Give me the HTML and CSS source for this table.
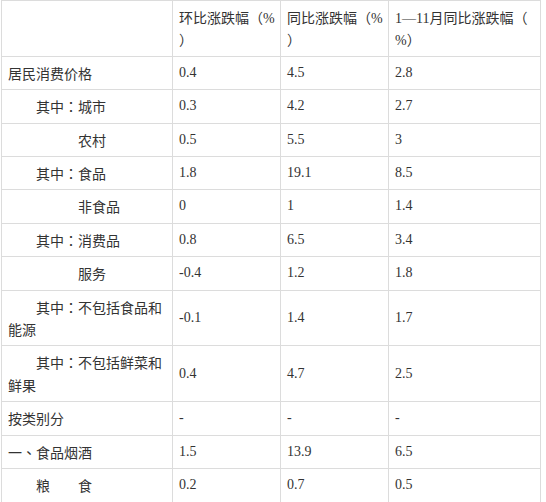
FILE: index.html
```html
<!DOCTYPE html>
<html lang="zh-CN">
<head>
<meta charset="utf-8">
<link rel="stylesheet" href="styles.css">
</head>
<body>
<table class="data">
  <colgroup>
    <col class="c1"><col class="c2"><col class="c3"><col class="c4">
  </colgroup>
  <thead>
    <tr>
      <th></th>
      <th><span class="ln">环比涨跌幅<span class="p" lang="zh-TW">（</span><span class="lat">%</span></span><span class="ln"><span class="p" lang="zh-TW">）</span></span></th>
      <th><span class="ln">同比涨跌幅<span class="p" lang="zh-TW">（</span><span class="lat">%</span></span><span class="ln"><span class="p" lang="zh-TW">）</span></span></th>
      <th><span class="ln"><span class="lat">1—11</span>月同比涨跌幅<span class="p" lang="zh-TW">（</span></span><span class="ln"><span class="lat">%</span><span class="p" lang="zh-TW">）</span></span></th>
    </tr>
  </thead>
  <tbody>
    <tr><td class="name">居民消费价格</td><td>0.4</td><td>4.5</td><td>2.8</td></tr>
    <tr><td class="name ind">其中<span class="p" lang="zh-TW">：</span>城市</td><td>0.3</td><td>4.2</td><td>2.7</td></tr>
    <tr><td class="name ind">　　　农村</td><td>0.5</td><td>5.5</td><td>3</td></tr>
    <tr><td class="name ind">其中<span class="p" lang="zh-TW">：</span>食品</td><td>1.8</td><td>19.1</td><td>8.5</td></tr>
    <tr><td class="name ind">　　　非食品</td><td>0</td><td>1</td><td>1.4</td></tr>
    <tr><td class="name ind">其中<span class="p" lang="zh-TW">：</span>消费品</td><td>0.8</td><td>6.5</td><td>3.4</td></tr>
    <tr><td class="name ind">　　　服务</td><td>-0.4</td><td>1.2</td><td>1.8</td></tr>
    <tr><td class="name ind">其中<span class="p" lang="zh-TW">：</span>不包括食品和能源</td><td>-0.1</td><td>1.4</td><td>1.7</td></tr>
    <tr><td class="name ind">其中<span class="p" lang="zh-TW">：</span>不包括鲜菜和鲜果</td><td>0.4</td><td>4.7</td><td>2.5</td></tr>
    <tr><td class="name">按类别分</td><td>-</td><td>-</td><td>-</td></tr>
    <tr><td class="name">一<span class="p" lang="zh-TW">、</span>食品烟酒</td><td>1.5</td><td>13.9</td><td>6.5</td></tr>
    <tr><td class="name ind">粮　　食</td><td>0.2</td><td>0.7</td><td>0.5</td></tr>
  </tbody>
</table>
</body>
</html>
```

FILE: styles.css
```css
html, body {
  margin: 0;
  padding: 0;
  background: #fff;
}

body {
  padding-left: 1px;
  font-family: "Liberation Serif", serif;
  font-size: 14px;
  line-height: 22.4px;
  color: #333;
}

.data {
  border-collapse: collapse;
  table-layout: fixed;
  width: 539px;
}

.c1 { width: 171px; }
.c2 { width: 108px; }
.c3 { width: 108px; }
.c4 { width: 152px; }

.data th,
.data td {
  border: 1px solid #dcdcdc;
  padding: 5px 6px;
  text-align: left;
  vertical-align: middle;
  font-weight: normal;
}

.data th {
  vertical-align: top;
  font-family: "Noto Sans CJK SC", sans-serif;
}

.data td.name {
  font-family: "Noto Sans CJK SC", sans-serif;
}

.data td.ind {
  text-indent: 2em;
}

.ln {
  display: block;
  white-space: nowrap;
}

.lat {
  font-family: "Liberation Serif", serif;
  line-height: 1;
}

.p {
  font-family: "Noto Sans CJK TC", sans-serif;
}
```
